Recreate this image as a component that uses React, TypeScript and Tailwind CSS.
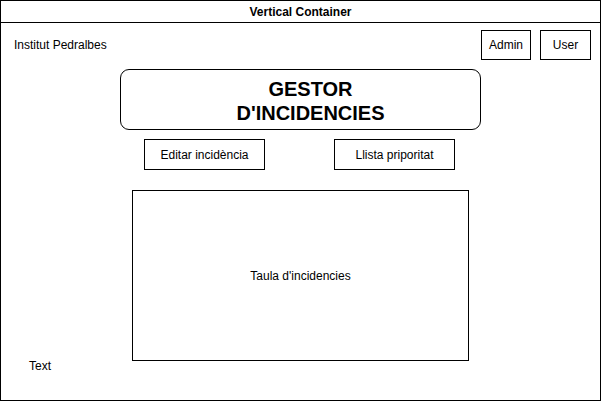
import React from "react";

export default function App() {
  return (
    <div
      className="w-[601px] h-[401px] bg-white text-black overflow-hidden"
      style={{ fontFamily: '"Liberation Sans", Arial, sans-serif' }}
    >
      <div className="w-[601px] h-[401px] border border-black flex flex-col box-border">
        <div className="h-[22px] shrink-0 border-b border-black flex items-center justify-center text-[12px] font-bold">
          Vertical Container
        </div>
        <div className="flex flex-col">
          <div className="mt-[7px] flex items-center pl-[13px] pr-[9px]">
            <span className="text-[12px] flex-1">Institut Pedralbes</span>
            <div className="w-[50px] h-[30px] border border-black flex items-center justify-center text-[12px]">
              Admin
            </div>
            <div className="ml-[9px] w-[51px] h-[30px] border border-black flex items-center justify-center text-[12px]">
              User
            </div>
          </div>
          <div className="mt-[9px] ml-[119px] w-[361px] h-[61px] border border-black rounded-[9px] pl-[20px] pt-[2px] flex flex-col items-center justify-center text-[20px] font-bold leading-[24px]">
            <span>GESTOR</span>
            <span>D'INCIDENCIES</span>
          </div>
          <div className="mt-[9px] flex">
            <div className="ml-[143px] w-[121px] h-[31px] border border-black flex items-center justify-center text-[12px]">
              Editar incidència
            </div>
            <div className="ml-[69px] w-[121px] h-[31px] border border-black flex items-center justify-center text-[12px]">
              Llista priporitat
            </div>
          </div>
          <div className="mt-[20px] ml-[131px] w-[337px] h-[171px] border border-black flex items-center justify-center text-[12px]">
            Taula d'incidencies
          </div>
          <div className="mt-[-2px] ml-[28px] text-[12px] leading-[14px]">Text</div>
        </div>
      </div>
    </div>
  );
}
